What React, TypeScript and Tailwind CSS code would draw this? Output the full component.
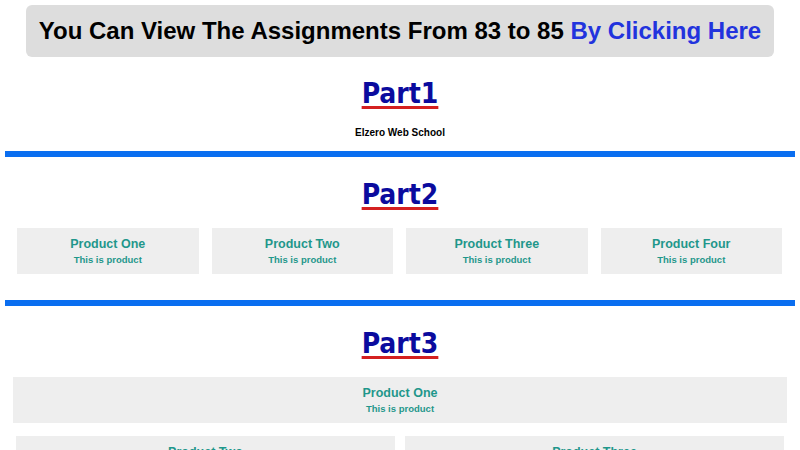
const heading = "font-['DejaVu_Sans_Condensed','DejaVu_Sans',sans-serif]";
const sans = "font-['Liberation_Sans',Arial,sans-serif]";

function PartTitle({ label }: { label: string }) {
  return (
    <h2
      className={`${heading} text-center text-[28px] font-bold leading-[36px] text-[#0b0b9e] underline decoration-[#d42020] decoration-[3px] underline-offset-[3px]`}
    >
      {label}
    </h2>
  );
}

function Product({ name }: { name: string }) {
  return (
    <div className={`${sans} flex h-[46px] flex-col items-center justify-center bg-[#eeeeee] text-[#1f978b]`}>
      <p className="text-[12.5px] font-bold leading-[17px]">{name}</p>
      <p className="text-[9.5px] font-bold leading-[14px]">This is product</p>
    </div>
  );
}

function Divider() {
  return <div className="h-[6px] bg-[#0a6ef0]" />;
}

export default function App() {
  return (
    <div className="min-h-screen w-full bg-white px-[5px] pt-[5px]">
      <div
        className={`${sans} mx-[21px] flex h-[52px] items-center justify-center whitespace-nowrap rounded-md bg-[#dddddd] text-[24px] font-bold text-black`}
      >
        <span>
          You Can View The Assignments From 83 to 85{" "}
          <a className="text-[#2233dd]">By Clicking Here</a>
        </span>
      </div>

      <div className="mt-[19px]">
        <PartTitle label="Part1" />
      </div>
      <p className={`${sans} mt-[13px] text-center text-[10px] font-bold leading-[16px] text-black`}>
        Elzero Web School
      </p>
      <div className="mt-[10px]">
        <Divider />
      </div>

      <div className="mt-[20px]">
        <PartTitle label="Part2" />
      </div>
      <div className="mt-[15px] grid grid-cols-4 gap-[13px] pl-[12px] pr-[13px]">
        <Product name="Product One" />
        <Product name="Product Two" />
        <Product name="Product Three" />
        <Product name="Product Four" />
      </div>
      <div className="mt-[26px]">
        <Divider />
      </div>

      <div className="mt-[20px]">
        <PartTitle label="Part3" />
      </div>
      <div className="mt-[15px] px-[8px]">
        <Product name="Product One" />
      </div>
      <div className="mt-[13px] grid grid-cols-2 gap-[10px] px-[11px]">
        <Product name="Product Two" />
        <Product name="Product Three" />
      </div>
    </div>
  );
}
